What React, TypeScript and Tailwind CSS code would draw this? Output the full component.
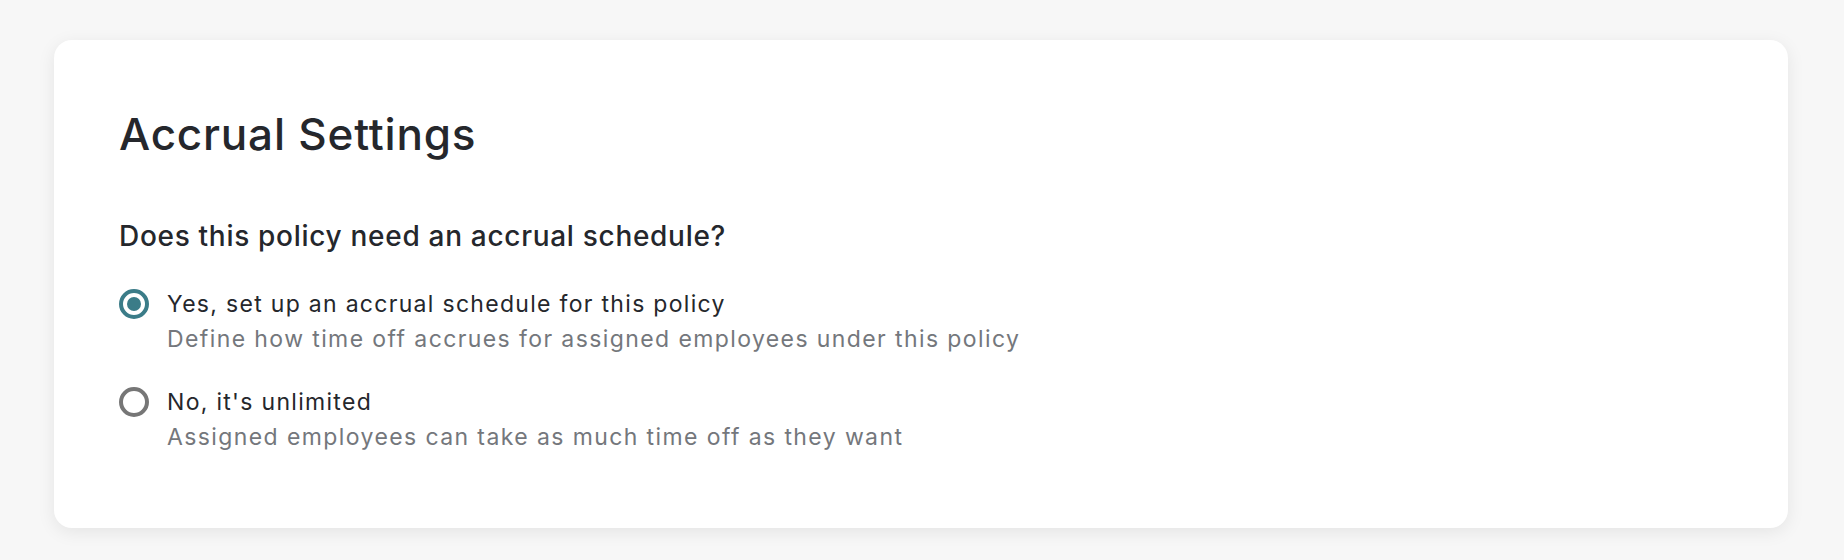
import type { FC } from 'react';
import { useState } from 'react';

// ===== opciones =====
const opciones = [
	{
		id: 'yes',
		label: 'Yes, set up an accrual schedule for this policy',
		desc: 'Define how time off accrues for assigned employees under this policy',
	},
	{
		id: 'no',
		label: "No, it's unlimited",
		desc: 'Assigned employees can take as much time off as they want',
	},
];

// ===== Page =====
const App: FC = () => {
	const [sel, setSel] = useState<string>('yes');

	return (
		<div className="min-h-[560px] bg-[#f7f7f7] pl-[54px] pr-[56px] pt-[40px] pb-[34px] font-['Inter',sans-serif]">
			<section className="rounded-[18px] bg-white pl-[65px] pr-[65px] pt-[68px] pb-[76px] shadow-[0_4px_18px_rgba(0,0,0,0.08)]">
				<h1 className="text-[44px] leading-[52px] font-medium text-[#25272c] tracking-[0.8px]">Accrual Settings</h1>

				<h2 className="mt-[58px] text-[28px] leading-[36px] font-medium text-[#25272c] tracking-[0.7px]">
					Does this policy need an accrual schedule?
				</h2>

				<div className="mt-[35px] flex flex-col gap-[33px]">
					{opciones.map((o) => (
						<label key={o.id} className="flex cursor-pointer items-start gap-[18px]" onClick={() => setSel(o.id)}>
							<Radio checked={sel === o.id} />
							<div>
								<div className="text-[23px] leading-[30px] text-[#25272c] tracking-[1.3px]">{o.label}</div>
								<div className="mt-[5px] text-[23px] leading-[30px] text-[#74777c] tracking-[1.4px]">{o.desc}</div>
							</div>
						</label>
					))}
				</div>
			</section>
		</div>
	);
};

export default App;

// ====== radio ======
function Radio(props: { checked: boolean }) {
	return props.checked ? (
		<span className="flex h-[30px] w-[30px] shrink-0 items-center justify-center rounded-full border-[4px] border-[#3b7c88]">
			<span className="h-[14px] w-[14px] rounded-full bg-[#3b7c88]" />
		</span>
	) : (
		<span className="h-[30px] w-[30px] shrink-0 rounded-full border-[4px] border-[#767676]" />
	);
}
